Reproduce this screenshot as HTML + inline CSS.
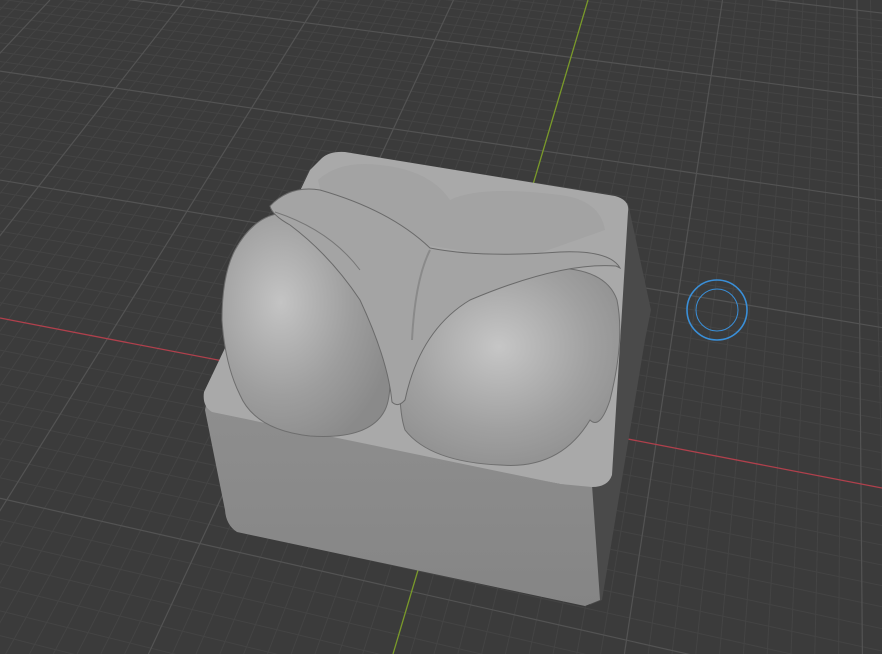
<!DOCTYPE html>
<html><head><style>html,body{margin:0;padding:0;background:#3b3b3b;overflow:hidden;width:882px;height:654px}svg{display:block}</style></head><body>
<svg width="882" height="654" viewBox="0 0 882 654" xmlns="http://www.w3.org/2000/svg">
<defs>
<radialGradient id="gl" cx="0.35" cy="0.4" r="0.7"><stop offset="0" stop-color="#c4c4c4"/><stop offset="0.6" stop-color="#9e9e9e"/><stop offset="1" stop-color="#8a8a8a"/></radialGradient>
<radialGradient id="gr" cx="0.45" cy="0.4" r="0.7"><stop offset="0" stop-color="#c6c6c6"/><stop offset="0.6" stop-color="#a0a0a0"/><stop offset="1" stop-color="#8c8c8c"/></radialGradient>
<linearGradient id="front" x1="0" y1="0" x2="0" y2="1"><stop offset="0" stop-color="#8e8e8e"/><stop offset="1" stop-color="#858585"/></linearGradient>
</defs>
<rect width="882" height="654" fill="#3b3b3b"/>
<g id="minor" stroke="#444" stroke-width="1"></g>
<g id="major" stroke="#535353" stroke-width="1.2"></g>
<line x1="0" y1="318" x2="882" y2="488" stroke="#b0404c" stroke-width="1.3"/>
<line x1="588" y1="0" x2="393" y2="654" stroke="#7a9a2a" stroke-width="1.3"/>
<circle cx="717" cy="310" r="30" fill="none" stroke="#3a8fd8" stroke-width="1.6"/>
<circle cx="717" cy="310" r="21" fill="none" stroke="#3a8fd8" stroke-width="1"/>
<path d="M612,205 L628,203 L651,310 L645,340 L602,600 L590,605 L575,485 Z" fill="#4a4a4a"/>
<path d="M206,405 L560,484 L592,485 L600,600 L585,606 L237,532 Q226,525 225,510 L205,410 Z" fill="url(#front)"/>
<path d="M322,158 Q330,151 345,152 L615,196 Q630,200 628,212 L612,475 Q608,487 592,487 L560,484 L212,412 Q202,406 204,392 L310,170 Z" fill="#a9a9a9"/>
<path d="M318,180 Q340,160 380,165 Q430,170 450,200 Q480,185 560,195 Q600,200 605,230 L520,260 L330,230 Z" fill="#a3a3a3"/>
<path d="M235,250 Q260,205 300,215 Q360,235 385,330 Q395,390 385,410 Q370,440 310,436 Q255,430 240,395 Q225,365 222,320 Q222,275 235,250 Z" fill="url(#gl)" stroke="#6e6e6e" stroke-width="1"/>
<path d="M405,330 Q450,275 540,268 Q605,265 617,300 Q625,340 610,400 Q600,430 590,420 Q560,470 500,465 Q430,462 405,430 Q395,400 405,330 Z" fill="url(#gr)" stroke="#6e6e6e" stroke-width="1"/>
<path d="M270,206 Q290,185 320,190 Q390,210 430,248 Q480,258 560,252 Q610,250 620,268 L616,266 Q560,262 470,300 Q420,330 405,400 Q398,408 392,402 Q388,360 360,300 Q330,255 290,225 Q272,215 270,206 Z" fill="#a4a4a4" stroke="#6a6a6a" stroke-width="1"/>
<path d="M275,212 Q330,230 360,270" fill="none" stroke="#777" stroke-width="1"/>
<path d="M430,250 Q415,280 412,340" fill="none" stroke="#8a8a8a" stroke-width="2"/>
</svg>
<script>
(function(){
var NS="http://www.w3.org/2000/svg";
var mi=document.getElementById("minor"),ma=document.getElementById("major");
function L(g,x1,y1,x2,y2){var l=document.createElementNS(NS,"line");l.setAttribute("x1",x1);l.setAttribute("y1",y1);l.setAttribute("x2",x2);l.setAttribute("y2",y2);g.appendChild(l);}
var hx=-5370,hy=-718;
for(var i=-40;i<=60;i++){var t=i/10;var d=(1-0.133*t);if(d<=0.05)continue;var y0=(114*t+318)/d;if(y0>2000)continue;
 var s=(y0-hy)/(0-hx);var y1=y0+s*882;if(i===0)continue;L(i%10===0?ma:mi,0,y0,882,y1);}
var vx=850,vy=-850;
for(var k=-80;k<=60;k++){if(k===0)continue;var x0=588+k*13.45;var s2=(x0-vx)/(0-vy);var x1=x0+s2*654;L(k%10===0?ma:mi,x0,0,x1,654);}
})();
</script>
</body></html>
